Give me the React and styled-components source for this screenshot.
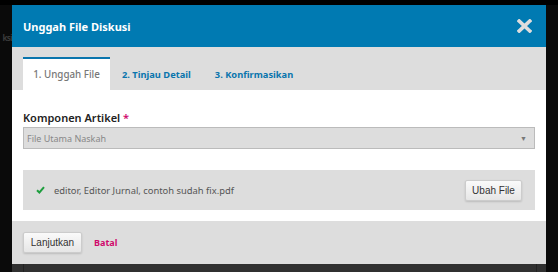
import styled, { createGlobalStyle } from "styled-components";

const GlobalStyle = createGlobalStyle`
    html, body {
        margin: 0;
        padding: 0;
        background: #0a0a0a;
    }
    body {
        font-family: "Noto Sans", "Liberation Sans", sans-serif;
    }
`;

const Page = styled.div`
    display: flex;
    flex-direction: column;
    padding-top: 5px;
    height: 272px;
    box-sizing: border-box;
    overflow: hidden;
    background: linear-gradient(#000 0 5px, #0a0a0a 5px);
`;

const Row = styled.div`
    display: flex;
`;

const Backdrop = styled.div`
    width: 12px;
    display: flex;
    justify-content: flex-end;
    padding-top: 28px;
    font-size: 8px;
    font-weight: 700;
    letter-spacing: -0.6px;
    color: #3a3a3a;
    white-space: nowrap;
    line-height: 10px;
`;

const Modal = styled.div`
    width: 534px;
    display: flex;
    flex-direction: column;
`;

const Header = styled.header`
    height: 42px;
    background: #007ab2;
    display: flex;
    align-items: center;
    justify-content: space-between;
    padding: 0 14px 0 11px;
`;

const Title = styled.h1`
    margin: 0;
    font-size: 11px;
    font-weight: 700;
    color: #fff;
`;

const CloseButton = styled.button`
    border: 0;
    background: none;
    padding: 0;
    width: 15px;
    height: 14px;
    display: flex;
    cursor: pointer;
`;

const TabBar = styled.nav`
    height: 43px;
    box-sizing: border-box;
    background: #ddd;
    padding: 10px 11px 0;
    display: flex;
    align-items: stretch;
`;

const Tab = styled.div`
    display: flex;
    align-items: center;
    justify-content: center;
    padding: 0 12px;
    white-space: nowrap;
    font-size: ${(p) => (p.$active ? "9.8px" : "9.3px")};
    font-weight: ${(p) => (p.$active ? 500 : 700)};
    color: ${(p) => (p.$active ? "#777" : "#0a75ad")};
    background: ${(p) => (p.$active ? "#fff" : "transparent")};
    border-top: 2px solid ${(p) => (p.$active ? "#0a75ad" : "transparent")};
    box-sizing: border-box;
    width: ${(p) => (p.$active ? "87px" : "auto")};
`;

const Body = styled.section`
    background: #fff;
    padding: 20px 11px 11px;
    display: flex;
    flex-direction: column;
`;

const Label = styled.label`
    font-size: 11px;
    font-weight: 600;
    color: #222;
    line-height: 16px;
    margin-bottom: 1px;
`;

const Star = styled.span`
    color: #d00a6c;
`;

const Select = styled.div`
    height: 22px;
    box-sizing: border-box;
    border: 1px solid #bbb;
    background: #ddd;
    display: flex;
    align-items: center;
    justify-content: space-between;
    padding: 0 7px 0 3px;
    font-size: 9px;
    color: #888;
`;

const Arrow = styled.span`
    font-size: 7px;
    color: #777;
`;

const FilePanel = styled.div`
    margin-top: 21px;
    height: 40px;
    background: #ddd;
    display: flex;
    align-items: center;
    padding: 0 13px;
    gap: 9px;
`;

const FileName = styled.span`
    flex: 1;
    font-size: 9.4px;
    color: #555;
`;

const Button = styled.button`
    height: 21px;
    width: ${(p) => p.$width};
    padding: 0;
    border: 1px solid #ccc;
    border-radius: 2px;
    background: linear-gradient(#fafafa, #e6e6e6);
    box-shadow: 0 1px 2px rgba(0, 0, 0, 0.15);
    font-family: "Liberation Sans", Arial, sans-serif;
    font-size: 10px;
    color: #333;
    cursor: pointer;
`;

const Footer = styled.footer`
    height: 43px;
    box-sizing: border-box;
    background: #ddd;
    display: flex;
    align-items: center;
    padding: 0 11px;
    gap: 12px;
`;

const CancelLink = styled.a`
    font-size: 9px;
    font-weight: 700;
    color: #d00a6c;
    cursor: pointer;
`;

const Underlay = styled.div`
    margin-left: 12px;
    width: 534px;
    height: 8px;
    background: #303030;
    display: flex;
    justify-content: space-between;
    padding: 0 9px 0 11px;
    box-sizing: border-box;
`;

const UnderlayLine = styled.span`
    width: 1px;
    background: #222;
`;

const CloseIcon = () => (
    <svg width="15" height="14" viewBox="0 0 15 14">
        <path d="M2.2 2 L12.8 12 M12.8 2 L2.2 12" stroke="#ddd" strokeWidth="3.6" strokeLinecap="square" />
    </svg>
);

const CheckIcon = () => (
    <svg width="9" height="8" viewBox="0 0 9 8">
        <path d="M1 4.2 L3.4 6.5 L8 1.2" stroke="#1e9e3e" strokeWidth="2" fill="none" />
    </svg>
);

export default function App() {
    return (
        <>
            <GlobalStyle />
            <Page>
                <Row>
                    <Backdrop>ksi</Backdrop>
                    <Modal>
                        <Header>
                            <Title>Unggah File Diskusi</Title>
                            <CloseButton aria-label="Tutup">
                                <CloseIcon />
                            </CloseButton>
                        </Header>
                        <TabBar>
                            <Tab $active>1. Unggah File</Tab>
                            <Tab>2. Tinjau Detail</Tab>
                            <Tab>3. Konfirmasikan</Tab>
                        </TabBar>
                        <Body>
                            <Label>
                                Komponen Artikel <Star>*</Star>
                            </Label>
                            <Select>
                                <span>File Utama Naskah</span>
                                <Arrow>▼</Arrow>
                            </Select>
                            <FilePanel>
                                <CheckIcon />
                                <FileName>editor, Editor Jurnal, contoh sudah fix.pdf</FileName>
                                <Button $width="57px">Ubah File</Button>
                            </FilePanel>
                        </Body>
                        <Footer>
                            <Button $width="59px">Lanjutkan</Button>
                            <CancelLink>Batal</CancelLink>
                        </Footer>
                    </Modal>
                </Row>
                <Underlay>
                    <UnderlayLine />
                    <UnderlayLine />
                </Underlay>
            </Page>
        </>
    );
}
